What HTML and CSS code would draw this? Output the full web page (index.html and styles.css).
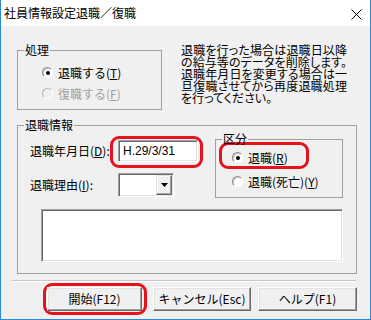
FILE: index.html
```html
<!DOCTYPE HTML>
<html>
<head>
<title>社員情報設定退職／復職</title>
<meta charset="utf-8" />
<link rel="stylesheet" href="styles.css">
</head>
<body>
  <div class="window">
    <div class="titlebar">
      <span class="title">社員情報設定退職／復職</span>
      <svg class="close" width="11" height="11" viewBox="0 0 11 11">
        <path d="M0.5 0.5L10.5 10.5M10.5 0.5L0.5 10.5" stroke="#000" stroke-width="1" fill="none"/>
      </svg>
    </div>
    <div class="client">
      <div class="top">
        <div class="group shori">
          <div class="legend">処理</div>
          <div class="radios">
            <div class="radio"><span class="dot checked"></span><span>退職する(<u>T</u>)</span></div>
            <div class="radio disabled"><span class="dot"></span><span>復職する(<u>F</u>)</span></div>
          </div>
        </div>
        <p class="note">
          <span class="line">退職を行った場合は退職日以降</span>
          <span class="line">の給与等のデータを削除します。</span>
          <span class="line">退職年月日を変更する場合は一</span>
          <span class="line">旦復職させてから再度退職処理</span>
          <span class="line last">を行ってください。</span>
        </p>
      </div>

      <div class="group info">
        <div class="legend">退職情報</div>
        <div class="info-top">
          <div class="fields">
            <div class="field date-row">
              <span class="label">退職年月日(<u>D</u>):</span>
              <span class="mark mark-date"><span class="edit">H.29/3/31</span></span>
            </div>
            <div class="field reason-row">
              <span class="label">退職理由(<u>I</u>):</span>
              <span class="combo">
                <span class="combo-btn">
                  <svg width="7" height="4" viewBox="0 0 7 4"><path d="M0 0H7L3.5 4Z" fill="#000"/></svg>
                </span>
              </span>
            </div>
          </div>
          <div class="group kubun">
            <div class="legend">区分</div>
            <div class="radio mark mark-kubun"><span class="dot checked"></span><span>退職(<u>R</u>)</span></div>
            <div class="radio second"><span class="dot"></span><span>退職(死亡)(<u>Y</u>)</span></div>
          </div>
        </div>
        <div class="memo"></div>
      </div>

      <div class="separator"></div>

      <div class="buttons">
        <span class="mark mark-start"><button class="btn first">開始(F12)</button></span>
        <button class="btn cancel">キャンセル(Esc)</button>
        <button class="btn help">ヘルプ(F1)</button>
      </div>
    </div>
  </div>
</body>
</html>
```

FILE: styles.css
```css
*{
  margin: 0;
  padding: 0;
}
body{
  background: #fff;
}
.window{
  width: 371px;
  height: 320px;
  box-sizing: border-box;
  border: 1px solid #2b88d8;
  border-top: 0;
  background: #f0f0f0;
  font: 12px/12px "Noto Sans CJK JP", "Liberation Sans", sans-serif;
  color: #000;
}
u{
  text-decoration: underline;
  text-underline-offset: 1px;
}

/* タイトルバー */
.titlebar{
  height: 26px;
  background: #fff;
  display: flex;
  align-items: center;
  padding-left: 3px;
}
.title{
  flex: 1;
}
.close{
  margin: 2px 8px 0 0;
}

/* 本体 */
.client{
  display: flex;
  flex-direction: column;
}
.top{
  display: flex;
  align-items: flex-start;
  margin-top: 17px;
}
.group{
  box-sizing: border-box;
  border: 1px solid #a0a0a0;
}
.legend{
  display: table;
  background: #f0f0f0;
  padding: 0 1px;
  margin: -7px 0 0 6px;
}
.shori{
  width: 145px;
  height: 60px;
  margin: 7px 0 0 16px;
}
.radios{
  margin-top: 6px;
  padding-left: 24px;
}
.radio{
  display: flex;
  align-items: center;
  height: 21px;
  gap: 5px;
  white-space: nowrap;
}
.dot{
  width: 11px;
  height: 11px;
  box-sizing: border-box;
  border-radius: 50%;
  border: 1px solid;
  border-color: #8a8a8a #fff #fff #8a8a8a;
  box-shadow: inset 1px 1px #c8c8c8;
  background: #fff;
  display: flex;
  align-items: center;
  justify-content: center;
}
.dot.checked::after{
  content: "";
  width: 4px;
  height: 4px;
  border-radius: 50%;
  background: #000;
}
.disabled{
  color: #a0a0a0;
}
.disabled .dot{
  background: #f0f0f0;
  border-color: #b4b4b4 #fff #fff #b4b4b4;
  box-shadow: none;
}
.note{
  margin: 1px 0 0 19px;
}
.note .line{
  display: block;
  width: 166px;
  white-space: nowrap;
  font-feature-settings: "palt";
  text-align: justify;
  text-align-last: justify;
}
.note .last{
  text-align-last: auto;
}

/* 退職情報 */
.info{
  width: 340px;
  height: 149px;
  margin: 15px 0 0 16px;
}
.info-top{
  display: flex;
  align-items: flex-start;
  margin-top: 8px;
}
.fields{
  margin-left: 12px;
  display: flex;
  flex-direction: column;
}
.field{
  display: flex;
  align-items: center;
}
.date-row{
  margin-top: 1px;
  height: 22px;
}
.reason-row{
  margin-top: 11px;
  height: 24px;
}
.label{
  width: 88px;
  white-space: nowrap;
}
.edit,.combo,.memo{
  box-sizing: border-box;
  background: #fff;
  border: 1px solid;
  border-color: #a0a0a0 #fff #fff #a0a0a0;
  box-shadow: inset 1px 1px #696969, inset -1px -1px #e3e3e3;
}
.edit{
  display: flex;
  align-items: center;
  width: 80px;
  height: 22px;
  padding-left: 4px;
  font-family: "Liberation Sans", sans-serif;
}
.combo{
  display: flex;
  justify-content: flex-end;
  width: 56px;
  height: 24px;
  padding: 1px;
}
.combo-btn{
  width: 16px;
  box-sizing: border-box;
  background: #f0f0f0;
  border: 1px solid;
  border-color: #e3e3e3 #696969 #696969 #e3e3e3;
  box-shadow: inset -1px -1px #a0a0a0, inset 1px 1px #fff;
  display: flex;
  align-items: center;
  justify-content: center;
}
.kubun{
  width: 128px;
  height: 59px;
  margin-left: 17px;
}
.kubun .radio{
  height: 17px;
  padding-left: 16px;
}
.kubun .mark-kubun{
  width: 90px;
  box-sizing: border-box;
  margin: -3px 0 0 3px;
  padding: 4px 0 0 10px;
  height: 27px;
  align-items: flex-start;
}
.mark-kubun .dot{
  margin-top: 3px;
}
.mark-kubun span + span{
  line-height: 17px;
}
.kubun .second{
  margin-top: 4px;
}
.memo{
  width: 302px;
  height: 53px;
  margin: 11px 0 0 23px;
}

/* 赤い囲み */
.mark{
  border: 3px solid #e8121c;
  border-radius: 9px;
}
.mark-date{
  display: flex;
  margin: -4px -5px -6px -8px;
  padding: 1px 2px 3px 5px;
}
.mark-start{
  display: flex;
  margin: -4px -5px -4px -4px;
  padding: 1px 2px 1px 1px;
}

/* ボタン */
.separator{
  width: 344px;
  margin: 6px 0 0 11px;
  border-top: 1px solid #c8c8c8;
  border-bottom: 1px solid #fff;
}
.buttons{
  display: flex;
  margin: 5px 0 0 46px;
}
.btn{
  height: 24px;
  font: inherit;
  color: #000;
  background: #f0f0f0;
  border: 1px solid;
  border-color: #fff #696969 #696969 #fff;
  box-shadow: inset -1px -1px #a0a0a0, inset 1px 1px #e3e3e3;
}
.first{
  width: 95px;
}
.cancel{
  width: 98px;
  margin-left: 11px;
}
.help{
  width: 99px;
  margin-left: 7px;
}
```
